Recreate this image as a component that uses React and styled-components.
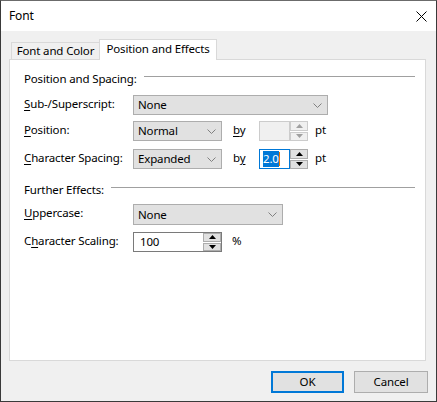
import React from "react";
import styled, { createGlobalStyle } from "styled-components";

const Global = createGlobalStyle`
  html, body { margin: 0; padding: 0; background: #f0f0f0; }
  body { font-family: "Noto Sans", "Open Sans", sans-serif; font-size: 11.5px; letter-spacing: -0.15px; color: #000; }
  * { box-sizing: border-box; }
  u { text-decoration: underline; text-underline-offset: 2px; text-decoration-thickness: 1px; }
`;

const Window = styled.div`
  width: 437px;
  height: 402px;
  border: 1px solid #3a3a3a;
  border-top-color: #6b6b6b;
  display: flex;
  flex-direction: column;
  background: #f0f0f0;
  overflow: hidden;
`;

const TitleBar = styled.div`
  height: 30px;
  background: #fff;
  display: flex;
  align-items: center;
  justify-content: space-between;
  padding: 0 9px 0 8px;
`;

const Title = styled.div`
  font-size: 12px;
  line-height: 16px;
`;

const CloseIcon = styled.svg`
  width: 11px;
  height: 11px;
  display: block;
`;

const Body = styled.div`
  flex: 1;
  display: flex;
  flex-direction: column;
  padding: 8px 10px 0 8px;
`;

const TabStrip = styled.div`
  display: flex;
  align-items: flex-end;
  height: 20px;
  padding-left: 2px;
  position: relative;
  z-index: 1;
`;

const Tab = styled.div`
  width: ${(p) => p.$w}px;
  height: ${(p) => (p.$active ? 21 : 17)}px;
  margin-bottom: ${(p) => (p.$active ? -1 : 0)}px;
  margin-left: ${(p) => (p.$active ? -1 : 0)}px;
  background: ${(p) => (p.$active ? "#fff" : "#f0f0f0")};
  border: 1px solid #d9d9d9;
  border-bottom: none;
  display: flex;
  align-items: center;
  justify-content: center;
  padding-bottom: ${(p) => (p.$active ? 3 : 0)}px;
  line-height: 16px;
  white-space: nowrap;
`;

const Panel = styled.div`
  height: 302px;
  background: #fff;
  border: 1px solid #d9d9d9;
  padding: 11px 10px 0 14px;
  display: flex;
  flex-direction: column;
`;

const GroupHeader = styled.div`
  display: flex;
  align-items: flex-start;
  height: 16px;
  margin-top: ${(p) => p.$mt || 0}px;
  line-height: 16px;
`;

const GroupTitle = styled.div`
  white-space: nowrap;
`;

const Rule = styled.div`
  flex: 1;
  height: 1px;
  margin: 5px 0 0 7px;
  background: #a0a0a0;
`;

const FieldRow = styled.div`
  display: flex;
  align-items: center;
  height: ${(p) => p.$h || 20}px;
  margin-top: ${(p) => p.$mt || 0}px;
`;

const Label = styled.div`
  width: 109px;
  flex: none;
  line-height: 16px;
  padding-bottom: 3px;
  white-space: nowrap;
`;

const SelectBox = styled.div`
  width: ${(p) => p.$w}px;
  height: 100%;
  background: #e1e1e1;
  border: 1px solid #adadad;
  display: flex;
  align-items: center;
  justify-content: space-between;
  padding: 0 5px 0 4px;
  line-height: 16px;
`;

const Chevron = styled.svg`
  width: 9px;
  height: 5px;
  display: block;
`;

const ByLabel = styled.div`
  width: 26px;
  margin-left: 11px;
  flex: none;
  line-height: 16px;
  padding-bottom: 3px;
`;

const Unit = styled.div`
  margin-left: ${(p) => p.$ml || 7}px;
  line-height: 16px;
  padding-bottom: 3px;
`;

const Spin = styled.div`
  width: ${(p) => p.$w}px;
  height: 100%;
  display: flex;
  border: ${(p) => (p.$outer ? `1px solid ${p.$outer}` : "none")};
`;

const SpinField = styled.div`
  flex: 1;
  height: 100%;
  border: ${(p) => (p.$border ? `1px solid ${p.$border}` : "none")};
  background: ${(p) => (p.$disabled ? "#f0f0f0" : "#fff")};
  display: flex;
  align-items: center;
  padding-left: ${(p) => p.$pl || 3}px;
  line-height: 16px;
`;

const SpinButtons = styled.div`
  width: 18px;
  height: 100%;
  display: flex;
  flex-direction: column;
  gap: 1px;
`;

const SpinBtn = styled.div`
  flex: 1;
  border: 1px solid ${(p) => (p.$disabled ? "#cccccc" : "#adadad")};
  background: ${(p) => (p.$disabled ? "#f0f0f0" : "#e1e1e1")};
  display: flex;
  align-items: center;
  justify-content: center;
`;

const Arrow = styled.svg`
  width: 7px;
  height: 4px;
  display: block;
`;

const Selected = styled.span`
  background: #0078d7;
  color: #fff;
`;

const Caret = styled.span`
  display: inline-block;
  width: 1px;
  height: 14px;
  background: #f07800;
  vertical-align: middle;
`;

const Footer = styled.div`
  display: flex;
  justify-content: flex-end;
  gap: 10px;
  padding-top: 10px;
  margin-right: -2px;
`;

const Button = styled.div`
  width: ${(p) => p.$w}px;
  height: 22px;
  background: #e1e1e1;
  border: ${(p) => (p.$default ? "2px solid #0078d7" : "1px solid #adadad")};
  display: flex;
  align-items: center;
  justify-content: center;
  line-height: 16px;
`;

const ChevronDown = () => (
  <Chevron viewBox="0 0 9 5">
    <path d="M0.5 0.5 L4.5 4.5 L8.5 0.5" fill="none" stroke="#808080" strokeWidth="1" />
  </Chevron>
);

const ArrowUp = ({ color }) => (
  <Arrow viewBox="0 0 7 4">
    <path d="M0 4 L3.5 0 L7 4 Z" fill={color} />
  </Arrow>
);

const ArrowDown = ({ color }) => (
  <Arrow viewBox="0 0 7 4">
    <path d="M0 0 L3.5 4 L7 0 Z" fill={color} />
  </Arrow>
);

const SpinControl = ({ disabled }) => (
  <SpinButtons>
    <SpinBtn $disabled={disabled}>
      <ArrowUp color={disabled ? "#a0a0a0" : "#000"} />
    </SpinBtn>
    <SpinBtn $disabled={disabled}>
      <ArrowDown color={disabled ? "#a0a0a0" : "#000"} />
    </SpinBtn>
  </SpinButtons>
);

export default function App() {
  return (
    <>
      <Global />
      <Window>
        <TitleBar>
          <Title>Font</Title>
          <CloseIcon viewBox="0 0 11 11">
            <path d="M0.5 0.5 L10.5 10.5 M10.5 0.5 L0.5 10.5" stroke="#000" strokeWidth="1" />
          </CloseIcon>
        </TitleBar>
        <Body>
          <TabStrip>
            <Tab $w={89}>Font and Color</Tab>
            <Tab $w={118} $active>Position and Effects</Tab>
          </TabStrip>
          <Panel>
            <GroupHeader>
              <GroupTitle>Position and Spacing:</GroupTitle>
              <Rule />
            </GroupHeader>
            <FieldRow $mt={8}>
              <Label><u>S</u>ub-/Superscript:</Label>
              <SelectBox $w={195}>None<ChevronDown /></SelectBox>
            </FieldRow>
            <FieldRow $mt={6}>
              <Label><u>P</u>osition:</Label>
              <SelectBox $w={89}>Normal<ChevronDown /></SelectBox>
              <ByLabel><u>b</u>y</ByLabel>
              <Spin $w={49}>
                <SpinField $border="#cccccc" $disabled />
                <SpinControl disabled />
              </Spin>
              <Unit>pt</Unit>
            </FieldRow>
            <FieldRow $mt={8}>
              <Label><u>C</u>haracter Spacing:</Label>
              <SelectBox $w={89}>Expanded<ChevronDown /></SelectBox>
              <ByLabel>b<u>y</u></ByLabel>
              <Spin $w={49}>
                <SpinField $border="#0078d7">
                  <Selected>2.0</Selected>
                  <Caret />
                </SpinField>
                <SpinControl />
              </Spin>
              <Unit>pt</Unit>
            </FieldRow>
            <GroupHeader $mt={13}>
              <GroupTitle>Further Effects:</GroupTitle>
              <Rule />
            </GroupHeader>
            <FieldRow $mt={6} $h={21}>
              <Label><u>U</u>ppercase:</Label>
              <SelectBox $w={150}>None<ChevronDown /></SelectBox>
            </FieldRow>
            <FieldRow $mt={7}>
              <Label>C<u>h</u>aracter Scaling:</Label>
              <Spin $w={89} $outer="#7a7a7a">
                <SpinField $pl={6}>100</SpinField>
                <SpinControl />
              </Spin>
              <Unit $ml={10}>%</Unit>
            </FieldRow>
          </Panel>
          <Footer>
            <Button $w={73} $default>OK</Button>
            <Button $w={74}>Cancel</Button>
          </Footer>
        </Body>
      </Window>
    </>
  );
}
